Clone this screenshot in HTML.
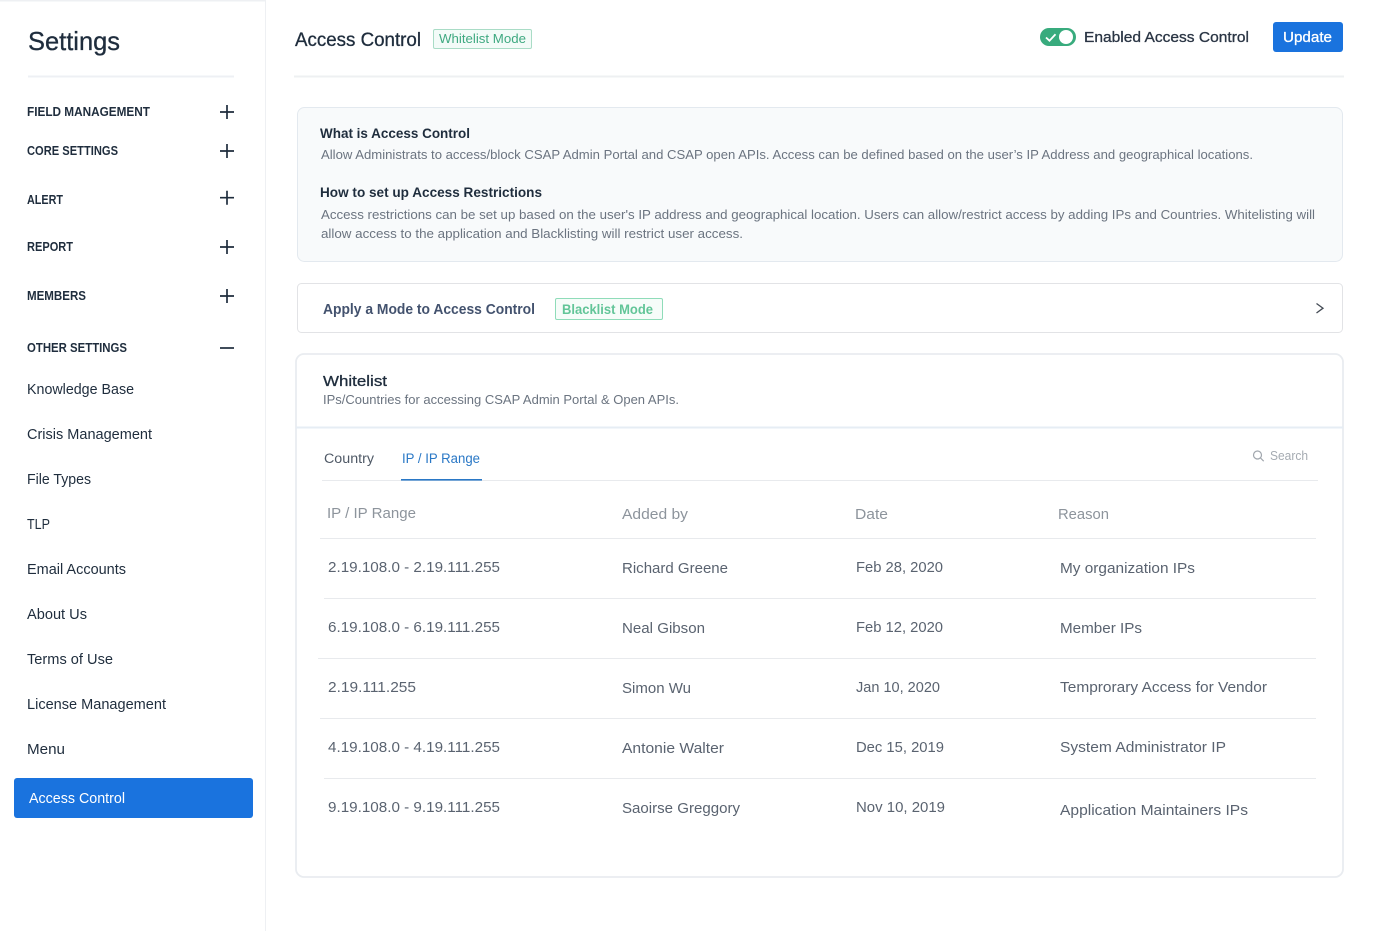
<!DOCTYPE html>
<html lang="en"><head><meta charset="utf-8"><title>Access Control</title>
<style>
html,body{margin:0;padding:0;background:#fff;width:1374px;height:931px;overflow:hidden}
svg{display:block}
text{font-family:"Liberation Sans",sans-serif;white-space:pre}
.h{font-size:12.5px;font-weight:700;fill:#1f2d3d}
.i{font-size:14.5px;fill:#1f2d3d}
.p{font-size:12.5px;fill:#6b7480}
.t{font-size:13.5px;font-weight:700;fill:#1f2d3d}
.c{font-size:14.5px;fill:#5a6370}
.th{font-size:14.5px;fill:#8d949c}
.ln{stroke:#e8eaed;stroke-width:1}
.b{stroke-width:.3px}
</style></head><body>
<svg width="1374" height="931" viewBox="0 0 1374 931" xmlns="http://www.w3.org/2000/svg">
<!-- sidebar -->
<rect x="0" y="0" width="266" height="1.5" fill="#eef0f3"/>
<rect x="265" y="0" width="1" height="931" fill="#eef0f3"/>
<text class="b" x="28" y="50" font-size="26" fill="#1f2d3d" stroke="#1f2d3d" textLength="92" lengthAdjust="spacingAndGlyphs">Settings</text>
<rect x="28" y="75.500" width="206" height="2" fill="#eef0f4"/>
<text class="h" x="27" y="116" textLength="123" lengthAdjust="spacingAndGlyphs">FIELD MANAGEMENT</text>
<text class="h" x="27" y="155" textLength="91" lengthAdjust="spacingAndGlyphs">CORE SETTINGS</text>
<text class="h" x="27" y="204" textLength="36" lengthAdjust="spacingAndGlyphs">ALERT</text>
<text class="h" x="27" y="251" textLength="46" lengthAdjust="spacingAndGlyphs">REPORT</text>
<text class="h" x="27" y="300" textLength="59" lengthAdjust="spacingAndGlyphs">MEMBERS</text>
<text class="h" x="27" y="352" textLength="100" lengthAdjust="spacingAndGlyphs">OTHER SETTINGS</text>
<g stroke="#1f2d3d" stroke-width="1.7" fill="none">
<path d="M220 112h14M227 105v14"/>
<path d="M220 151h14M227 144v14"/>
<path d="M220 197.700h14M227 190.700v14"/>
<path d="M220 247h14M227 240v14"/>
<path d="M220 296h14M227 289v14"/>
<path d="M220 348h14"/>
</g>
<text class="i" x="27" y="394" textLength="107" lengthAdjust="spacingAndGlyphs">Knowledge Base</text>
<text class="i" x="27" y="439" textLength="125" lengthAdjust="spacingAndGlyphs">Crisis Management</text>
<text class="i" x="27" y="484" textLength="64" lengthAdjust="spacingAndGlyphs">File Types</text>
<text class="i" x="27" y="529" textLength="23" lengthAdjust="spacingAndGlyphs">TLP</text>
<text class="i" x="27" y="574" textLength="99" lengthAdjust="spacingAndGlyphs">Email Accounts</text>
<text class="i" x="27" y="619" textLength="60" lengthAdjust="spacingAndGlyphs">About Us</text>
<text class="i" x="27" y="664" textLength="86" lengthAdjust="spacingAndGlyphs">Terms of Use</text>
<text class="i" x="27" y="709" textLength="139" lengthAdjust="spacingAndGlyphs">License Management</text>
<text class="i" x="27" y="754" textLength="38" lengthAdjust="spacingAndGlyphs">Menu</text>
<rect x="14" y="778" width="239" height="40" rx="3" fill="#1a73de"/>
<text x="29" y="803" font-size="14.500" fill="#fff" textLength="96" lengthAdjust="spacingAndGlyphs">Access Control</text>
<!-- header -->
<text class="b" x="295" y="46" font-size="19" fill="#1f2d3d" stroke="#1f2d3d" textLength="126" lengthAdjust="spacingAndGlyphs">Access Control</text>
<rect x="433.500" y="29.500" width="98" height="19" rx="1.500" fill="#f3fbf8" stroke="#a9dcc6"/>
<text x="439" y="43" font-size="12.500" fill="#3fa981" textLength="87" lengthAdjust="spacingAndGlyphs">Whitelist Mode</text>
<rect x="1040" y="28" width="36" height="18" rx="9" fill="#38ab7d"/>
<circle cx="1066" cy="37" r="7" fill="#fff"/>
<path d="M1046 37.500l3.500 3.200 6-6.400" stroke="#fff" stroke-width="1.800" fill="none"/>
<text class="b" x="1084" y="42" font-size="14.500" fill="#2a3544" stroke="#2a3544" textLength="165" lengthAdjust="spacingAndGlyphs">Enabled Access Control</text>
<rect x="1273" y="22" width="70" height="30" rx="3" fill="#1a73de"/>
<text class="b" x="1283" y="42" font-size="14.500" fill="#fff" stroke="#fff" textLength="49" lengthAdjust="spacingAndGlyphs">Update</text>
<rect x="294" y="75.500" width="1050" height="2" fill="#eef0f2"/>
<!-- info -->
<rect x="297.500" y="107.500" width="1045" height="154" rx="7" fill="#f8fafb" stroke="#e3e9ef"/>
<text class="t" x="320" y="138" textLength="150" lengthAdjust="spacingAndGlyphs">What is Access Control</text>
<text class="p" x="321" y="159" textLength="932" lengthAdjust="spacingAndGlyphs">Allow Administrats to access/block CSAP Admin Portal and CSAP open APIs. Access can be defined based on the user’s IP Address and geographical locations.</text>
<text class="t" x="320" y="197" textLength="222" lengthAdjust="spacingAndGlyphs">How to set up Access Restrictions</text>
<text class="p" x="321" y="219" textLength="994" lengthAdjust="spacingAndGlyphs">Access restrictions can be set up based on the user's IP address and geographical location. Users can allow/restrict access by adding IPs and Countries. Whitelisting will</text>
<text class="p" x="321" y="238" textLength="422" lengthAdjust="spacingAndGlyphs">allow access to the application and Blacklisting will restrict user access.</text>
<!-- mode -->
<rect x="297.500" y="283.500" width="1045" height="49" rx="4" fill="#fff" stroke="#e2e3e6"/>
<text x="323" y="314" font-size="14.500" font-weight="700" fill="#43526e" textLength="212" lengthAdjust="spacingAndGlyphs">Apply a Mode to Access Control</text>
<rect x="555.500" y="298.500" width="107" height="21" rx="1.500" fill="#f6fcf9" stroke="#8fdcb9"/>
<text x="562" y="314" font-size="14" font-weight="700" fill="#62c598" textLength="91" lengthAdjust="spacingAndGlyphs">Blacklist Mode</text>
<path d="M1316.500 303.500l6.500 4.700-6.500 4.800" stroke="#444b55" stroke-width="1.300" fill="none"/>
<!-- whitelist card -->
<rect x="296" y="354" width="1047" height="523" rx="8" fill="#fff" stroke="#e9ecf0" stroke-width="1.800"/>
<rect x="296" y="426.500" width="1047" height="2" fill="#e6edf4"/>
<text class="b" x="323" y="386" font-size="14.500" fill="#1f2d3d" stroke="#1f2d3d" textLength="64" lengthAdjust="spacingAndGlyphs">Whitelist</text>
<text x="323" y="404" font-size="12.500" fill="#6b7480" textLength="356" lengthAdjust="spacingAndGlyphs">IPs/Countries for accessing CSAP Admin Portal &amp; Open APIs.</text>
<text x="324" y="463" font-size="13.500" fill="#4f5966" textLength="50" lengthAdjust="spacingAndGlyphs">Country</text>
<text x="402" y="463" font-size="13.500" fill="#2a78c6" textLength="78" lengthAdjust="spacingAndGlyphs">IP / IP Range</text>
<rect x="322" y="480" width="996" height="1" fill="#e8eaed"/>
<rect x="401" y="479" width="81" height="1.600" fill="#2a78c6"/>
<circle cx="1257.500" cy="455" r="4" fill="none" stroke="#a0a6ad" stroke-width="1.200"/>
<path d="M1260.500 458l3.200 3.200" stroke="#a0a6ad" stroke-width="1.200"/>
<text x="1270" y="460" font-size="12.500" fill="#a5abb2" textLength="38" lengthAdjust="spacingAndGlyphs">Search</text>
<!-- table head -->
<text class="th" x="327" y="518" textLength="89" lengthAdjust="spacingAndGlyphs">IP / IP Range</text>
<text class="th" x="622" y="519" textLength="66" lengthAdjust="spacingAndGlyphs">Added by</text>
<text class="th" x="855" y="519" textLength="33" lengthAdjust="spacingAndGlyphs">Date</text>
<text class="th" x="1058" y="519" textLength="51" lengthAdjust="spacingAndGlyphs">Reason</text>
<path class="ln" d="M320 538.500h996M324 598.500h992M318 658.500h998M320 718.500h996M324 778.500h992"/>
<!-- rows -->
<text class="c" x="328" y="572" textLength="172" lengthAdjust="spacingAndGlyphs">2.19.108.0 - 2.19.111.255</text>
<text class="c" x="622" y="573" textLength="106" lengthAdjust="spacingAndGlyphs">Richard Greene</text>
<text class="c" x="856" y="572" textLength="87" lengthAdjust="spacingAndGlyphs">Feb 28, 2020</text>
<text class="c" x="1060" y="573" textLength="135" lengthAdjust="spacingAndGlyphs">My organization IPs</text>
<text class="c" x="328" y="632" textLength="172" lengthAdjust="spacingAndGlyphs">6.19.108.0 - 6.19.111.255</text>
<text class="c" x="622" y="633" textLength="83" lengthAdjust="spacingAndGlyphs">Neal Gibson</text>
<text class="c" x="856" y="632" textLength="87" lengthAdjust="spacingAndGlyphs">Feb 12, 2020</text>
<text class="c" x="1060" y="633" textLength="82" lengthAdjust="spacingAndGlyphs">Member IPs</text>
<text class="c" x="328" y="692" textLength="88" lengthAdjust="spacingAndGlyphs">2.19.111.255</text>
<text class="c" x="622" y="693" textLength="69" lengthAdjust="spacingAndGlyphs">Simon Wu</text>
<text class="c" x="856" y="692" textLength="84" lengthAdjust="spacingAndGlyphs">Jan 10, 2020</text>
<text class="c" x="1060" y="692" textLength="207" lengthAdjust="spacingAndGlyphs">Temprorary Access for Vendor</text>
<text class="c" x="328" y="752" textLength="172" lengthAdjust="spacingAndGlyphs">4.19.108.0 - 4.19.111.255</text>
<text class="c" x="622" y="753" textLength="102" lengthAdjust="spacingAndGlyphs">Antonie Walter</text>
<text class="c" x="856" y="752" textLength="88" lengthAdjust="spacingAndGlyphs">Dec 15, 2019</text>
<text class="c" x="1060" y="752" textLength="166" lengthAdjust="spacingAndGlyphs">System Administrator IP</text>
<text class="c" x="328" y="812" textLength="172" lengthAdjust="spacingAndGlyphs">9.19.108.0 - 9.19.111.255</text>
<text class="c" x="622" y="813" textLength="118" lengthAdjust="spacingAndGlyphs">Saoirse Greggory</text>
<text class="c" x="856" y="812" textLength="89" lengthAdjust="spacingAndGlyphs">Nov 10, 2019</text>
<text class="c" x="1060" y="815" textLength="188" lengthAdjust="spacingAndGlyphs">Application Maintainers IPs</text>
</svg>
</body></html>
